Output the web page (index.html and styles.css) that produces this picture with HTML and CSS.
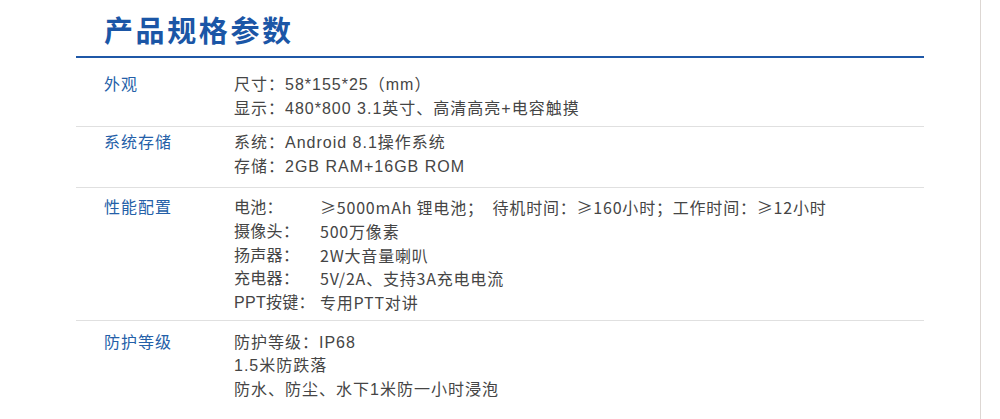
FILE: index.html
```html
<!DOCTYPE html>
<html lang="zh-CN">
<head>
<meta charset="utf-8">
<title>产品规格参数</title>
<link rel="stylesheet" href="styles.css">
</head>
<body>
<div class="page">
  <div class="content">
    <h1 class="title">产品规格参数</h1>
    <div class="spec spec-1">
      <div class="label">外观</div>
      <div class="value">
        <div>尺寸：58*155*25（mm）</div>
        <div>显示：480*800 3.1英寸、高清高亮+电容触摸</div>
      </div>
    </div>
    <div class="spec spec-2">
      <div class="label">系统存储</div>
      <div class="value">
        <div>系统：Android 8.1操作系统</div>
        <div>存储：2GB RAM+16GB ROM</div>
      </div>
    </div>
    <div class="spec spec-3">
      <div class="label">性能配置</div>
      <div class="value kv">
        <div class="k">电池：</div><div class="v">≥5000mAh 锂电池；&nbsp; 待机时间：≥160小时；工作时间：≥12小时</div>
        <div class="k">摄像头：</div><div class="v">500万像素</div>
        <div class="k">扬声器：</div><div class="v">2W大音量喇叭</div>
        <div class="k">充电器：</div><div class="v">5V/2A、支持3A充电电流</div>
        <div class="k">PPT按键：</div><div class="v">专用PTT对讲</div>
      </div>
    </div>
    <div class="spec spec-4">
      <div class="label">防护等级</div>
      <div class="value">
        <div>防护等级：IP68</div>
        <div>1.5米防跌落</div>
        <div>防水、防尘、水下1米防一小时浸泡</div>
      </div>
    </div>
  </div>
</div>
</body>
</html>
```

FILE: styles.css
```css
html, body {
  margin: 0;
  padding: 0;
  background: #ffffff;
}

body {
  font-family: "Liberation Sans", "Noto Sans CJK SC", sans-serif;
  color: #454545;
}

.page {
  width: 980px;
  height: 419px;
  border-right: 1px solid #ddd7d3;
  box-sizing: content-box;
  overflow: hidden;
}

.content {
  margin-left: 76px;
  width: 848px;
}

.title {
  margin: 0;
  padding: 12px 0 4px 28px;
  line-height: 40px;
  font-size: 29px;
  letter-spacing: 2.6px;
  font-weight: 700;
  color: #1b56a6;
  border-bottom: 2px solid #1f58a7;
}

.spec {
  display: grid;
  grid-template-columns: 130px 1fr;
  padding-left: 28px;
  border-bottom: 1px solid #e0e0e0;
  font-size: 16px;
  line-height: 23.5px;
  letter-spacing: 1px;
}

.spec-1 { padding-top: 15px; padding-bottom: 6px; }
.spec-2 { padding-top: 4px; padding-bottom: 9px; }
.spec-3 { padding-top: 8px; padding-bottom: 5px; line-height: 23.75px; }
.spec-4 { padding-top: 10px; padding-bottom: 0; border-bottom: none; }

.label {
  color: #2460a8;
}

.kv {
  display: grid;
  grid-template-columns: 86px 1fr;
  letter-spacing: 0.3px;
}

.kv .v {
  font-family: "Noto Sans CJK SC", "Liberation Sans", sans-serif;
  letter-spacing: 0.8px;
}
```
